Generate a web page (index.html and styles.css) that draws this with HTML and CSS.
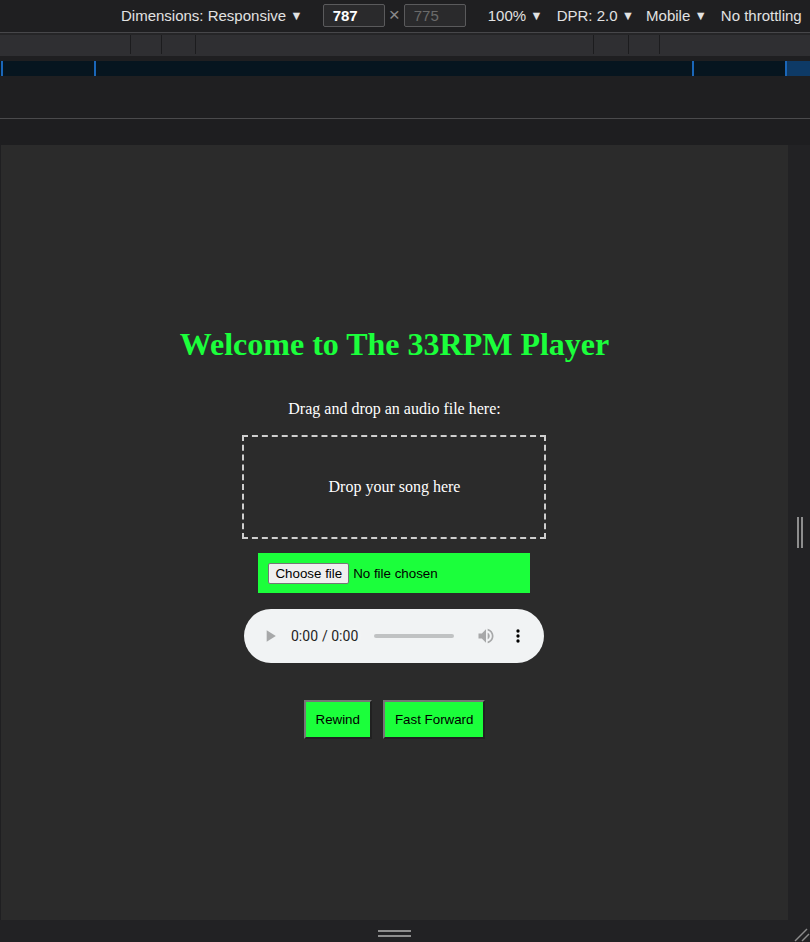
FILE: index.html
```html
<!DOCTYPE html>
<html>
<head>
<meta charset="utf-8">
<title>33RPM Player</title>
<link rel="stylesheet" href="styles.css">
</head>
<body>
<div class="devtools">
  <div class="toolbar">
    <span class="tb-item tb-dim">Dimensions: Responsive <span class="caret">▼</span></span>
    <span class="tb-box tb-w">787</span>
    <span class="tb-x">×</span>
    <span class="tb-box tb-h">775</span>
    <span class="tb-item tb-zoom">100% <span class="caret">▼</span></span>
    <span class="tb-item tb-dpr">DPR: 2.0 <span class="caret">▼</span></span>
    <span class="tb-item tb-mob">Mobile <span class="caret">▼</span></span>
    <span class="tb-item tb-thr">No throttling</span>
  </div>
  <div class="sep-light"></div>
  <div class="sep-dark"></div>
  <div class="ruler">
    <div class="ruler-seg s1"></div>
    <div class="ruler-seg s2"></div>
    <div class="ruler-seg s3"></div>
    <div class="ruler-seg s4"></div>
    <div class="ruler-seg s5"></div>
    <div class="ruler-seg s6"></div>
    <div class="ruler-seg s7"></div>
  </div>
  <div class="gap5"></div>
  <div class="mq">
    <div class="mq-seg m1"></div>
    <div class="mq-seg m2"></div>
    <div class="mq-seg m3"></div>
    <div class="mq-seg m4"></div>
  </div>
  <div class="space42"></div>
  <div class="hline"></div>
  <div class="space26"></div>
  <div class="main-row">
    <div class="viewport">
      <div class="page">
        <h1 class="title">Welcome to The 33RPM Player</h1>
        <p class="hint">Drag and drop an audio file here:</p>
        <div class="dropzone">Drop your song here</div>
        <div class="file-box">
          <label class="file-label">
            <input type="file" class="file-input">
            <span class="file-btn">Choose file</span>
            <span class="file-name">No file chosen</span>
          </label>
        </div>
        <audio class="player" controls></audio>
        <div class="buttons">
          <button class="btn">Rewind</button>
          <button class="btn">Fast Forward</button>
        </div>
      </div>
    </div>
    <div class="side">
      <div class="side-handle"><span></span><span></span></div>
    </div>
  </div>
  <div class="bottom">
    <div class="bottom-handle"><span></span><span></span></div>
    <svg class="corner" width="18" height="18" viewBox="0 0 18 18">
      <line x1="3" y1="17" x2="15" y2="5" stroke="#8c8c8c" stroke-width="1.5"/>
      <line x1="10" y1="17" x2="17" y2="10" stroke="#8c8c8c" stroke-width="1.5"/>
    </svg>
  </div>
</div>
</body>
</html>
```
FILE: styles.css
```css
html, body {
  margin: 0;
  padding: 0;
  background: #1f1f21;
}
body {
  width: 810px;
  height: 942px;
  overflow: hidden;
}
.devtools {
  width: 810px;
  height: 942px;
  display: flex;
  flex-direction: column;
  background: #1f1f21;
}
.toolbar {
  height: 32px;
  display: flex;
  align-items: center;
  padding-left: 121px;
  padding-bottom: 2px;
  font-family: "Liberation Sans", Arial, sans-serif;
  font-size: 15px;
  color: #e2e2e2;
  white-space: nowrap;
  background: #1f1f21;
  box-sizing: border-box;
}
.caret {
  font-size: 12.5px;
  position: relative;
  top: -1px;
}
.tb-box {
  box-sizing: border-box;
  width: 62px;
  height: 23px;
  border: 1px solid #5a5a5c;
  border-radius: 2px;
  background: #2a2a2c;
  padding-left: 9px;
  line-height: 21px;
}
.tb-w { margin-left: 20px; color: #fff; font-weight: bold; }
.tb-x { margin: 0 4px 0 4px; color: #8a8a8a; font-size: 19px; line-height: 20px; }
.tb-h { color: #6a6a6a; }
.tb-zoom { margin-left: 22px; }
.tb-dpr { margin-left: 14px; }
.tb-mob { margin-left: 12px; }
.tb-thr { margin-left: 14px; }

.sep-light { height: 1px; background: #47474a; }
.sep-dark { height: 2px; background: #252527; }
.ruler {
  height: 21px;
  display: flex;
  background: #2f2f32;
}
.ruler-seg {
  height: 19px;
  border-right: 1px solid #1c1c1e;
  box-sizing: border-box;
}
.s1 { width: 131px; }
.s2 { width: 31px; }
.s3 { width: 34px; }
.s4 { width: 398px; }
.s5 { width: 35px; }
.s6 { width: 31px; }
.s7 { flex: 1; border-right: none; }
.gap5 { height: 5px; }
.mq {
  height: 15px;
  display: flex;
  background: #06151f;
}
.mq-seg {
  height: 100%;
  border-left: 2px solid #1a66b8;
  box-sizing: border-box;
}
.m1 { width: 93px; margin-left: 1px; }
.m2 { width: 598px; }
.m3 { width: 93px; }
.m4 { flex: 1; background: #0e3a66; }
.space42 { height: 42px; }
.hline { height: 1px; background: #4a4a4c; }
.space26 { height: 26px; background: #1e1e20; }

.main-row {
  height: 775px;
  display: flex;
}
.viewport {
  width: 787px;
  height: 775px;
  margin-left: 1px;
  background: #2b2b2b;
  display: flex;
  flex-direction: column;
  align-items: center;
  justify-content: center;
}
.side {
  flex: 1;
  background: #222224;
  display: flex;
  align-items: center;
  justify-content: center;
}
.side-handle {
  display: flex;
  gap: 2px;
  margin-left: 2px;
}
.side-handle span {
  width: 2px;
  height: 31px;
  background: #8e8e8e;
}
.bottom {
  height: 22px;
  box-sizing: border-box;
  padding-top: 5px;
  background: #222224;
  display: flex;
  align-items: center;
  justify-content: center;
  position: relative;
}
.bottom-handle {
  display: flex;
  flex-direction: column;
  gap: 3px;
  margin-right: 22px;
}
.bottom-handle span {
  width: 33px;
  height: 2px;
  background: #8e8e8e;
}
.corner {
  position: absolute;
  right: 0;
  bottom: 0;
}

.page {
  display: flex;
  flex-direction: column;
  align-items: center;
  font-family: "Liberation Serif", "Times New Roman", serif;
  color: #ffffff;
}
.title {
  font-size: 32px;
  font-weight: bold;
  color: #1bff3b;
  margin: 0 0 37px 0;
  line-height: 37px;
}
.hint {
  font-size: 16px;
  margin: 0 0 17px 0;
  line-height: 18px;
}
.dropzone {
  width: 300px;
  height: 100px;
  border: 2px dashed #cfcfcf;
  display: flex;
  align-items: center;
  justify-content: center;
  font-size: 16px;
}
.file-box {
  margin-top: 14px;
  background: #1bff3b;
  padding: 10px;
  width: 252px;
  height: 20px;
  display: flex;
  align-items: center;
}
.file-label {
  display: flex;
  align-items: center;
  font-family: "Liberation Sans", Arial, sans-serif;
  font-size: 13.33px;
  color: #000;
}
.file-input {
  display: none;
}
.file-btn {
  box-sizing: border-box;
  height: 21px;
  padding: 0 6px;
  line-height: 19px;
  background: #efefef;
  border: 1px solid #767676;
  border-radius: 2px;
  margin-right: 4px;
}
.player {
  margin-top: 16px;
  width: 300px;
  height: 54px;
}
.buttons {
  margin-top: 37px;
  display: flex;
  gap: 11px;
}
.btn {
  font-family: "Liberation Sans", Arial, sans-serif;
  font-size: 13.33px;
  background: #1bff3b;
  color: #000;
  padding: 10px;
  border: 2px outset #767676;
  line-height: 15px;
}
```
